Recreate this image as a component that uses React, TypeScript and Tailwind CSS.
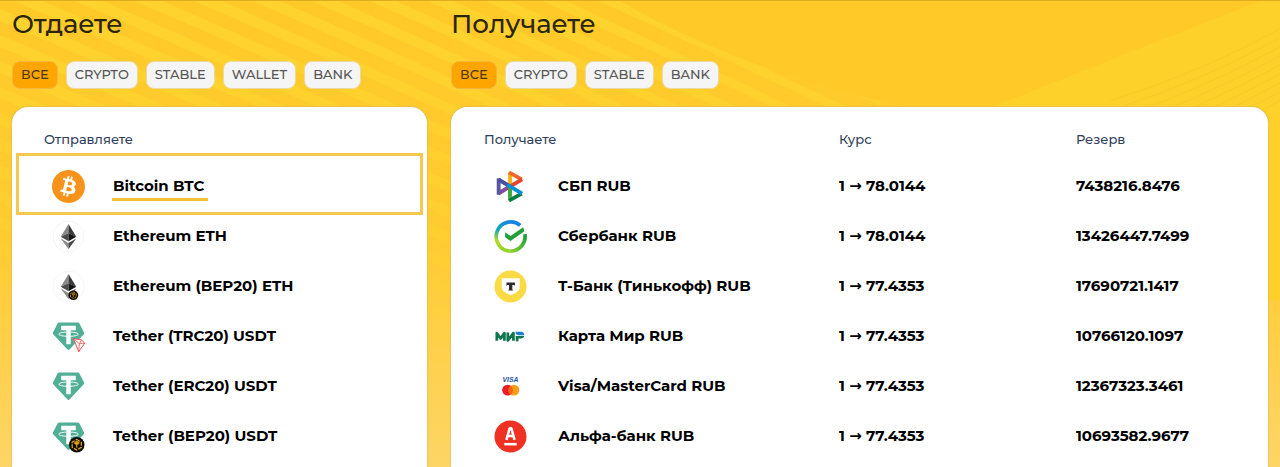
import { useState } from 'react';
import type { ReactNode } from 'react';
import { SiBitcoin } from 'react-icons/si';

function BitcoinIcon() {
  return <SiBitcoin className="size-[33px] text-[#f7931a]" />;
}

function EthShape() {
  return (
    <>
      <circle cx="17" cy="17" r="16" fill="#fff" stroke="#f6f6f6" />
      <path d="M17 4 9 17.200 17 13.600Z" fill="#8a8a8a" />
      <path d="M17 4v9.600l8 3.600Z" fill="#393939" />
      <path d="M9 17.200 17 13.600V22Z" fill="#4b4b4b" />
      <path d="M25 17.200 17 13.600V22Z" fill="#151515" />
      <path d="M9 19 17 23.800V30Z" fill="#8a8a8a" />
      <path d="M25 19 17 23.800V30Z" fill="#454545" />
    </>
  );
}

function BnbBadge({ cx, cy, r }: { cx: number; cy: number; r: number }) {
  return (
    <g transform={`translate(${cx} ${cy}) scale(${r / 8})`}>
      <circle r="8" fill="#0c0a05" />
      <path d="M0-5.400 4.700-2.700V2.700L0 5.400-4.700 2.700V-2.700Z" fill="none" stroke="#e5a20c" strokeWidth="1.300" strokeDasharray="4 1.200" />
      <path d="M-2.600-1.700 0-.2 2.600-1.700M0 0V3M0-3.400 1.600-2.500 0-1.600-1.600-2.500Z" fill="none" stroke="#e5a20c" strokeWidth="1.200" />
    </g>
  );
}

function EthereumIcon() {
  return <svg viewBox="0 0 34 34" className="size-[33px]"><EthShape /></svg>;
}

function EthereumBepIcon() {
  return (
    <svg viewBox="0 0 34 34" className="size-[33px]">
      <EthShape />
      <BnbBadge cx={22} cy={26} r={5} />
    </svg>
  );
}

function TetherShape() {
  return (
    <>
      <path d="M7.200 2.500h19.600a1.500 1.500 0 0 1 1.300.8L33 13a1.500 1.500 0 0 1-.3 1.800L18 30.500a1.500 1.500 0 0 1-2 0L1.300 14.800A1.500 1.500 0 0 1 1 13l4.900-9.700a1.500 1.500 0 0 1 1.300-.8Z" fill="#50af95" />
      <path d="M9.500 6h15v4.600h-5.200V25h-4.600V10.600H9.500Z" fill="#fff" />
      <path d="M14.500 12.500c-4.300.2-7.500 1-7.500 2.100 0 1.300 4.500 2.200 10 2.200s10-.9 10-2.200c0-1.100-3.200-1.900-7.500-2.100" fill="none" stroke="#fff" strokeWidth="1" />
    </>
  );
}

function TetherIcon() {
  return <svg viewBox="0 0 34 34" className="size-[33px]"><TetherShape /></svg>;
}

function TetherTrcIcon() {
  return (
    <svg viewBox="0 0 34 34" className="size-[33px]">
      <TetherShape />
      <path d="M22 19 30.500 20.700 33.700 23.800 27.500 32.700Z" fill="#fff" stroke="#ef4d50" strokeWidth="1" strokeLinejoin="round" />
      <path d="m22 19 6.200 5.500-.7 8.200M28.200 24.500l5.500-.7M28.200 24.500l2.300-3.800" fill="none" stroke="#ef4d50" strokeWidth=".8" />
    </svg>
  );
}

function TetherBepIcon() {
  return (
    <svg viewBox="0 0 34 34" className="size-[33px]">
      <TetherShape />
      <BnbBadge cx={25.500} cy={25.500} r={8} />
    </svg>
  );
}

function SbpIcon() {
  return (
    <svg viewBox="0 0 34 34" className="size-[33px]" fill="none" strokeWidth="4">
      <path d="M16.500 2.500V17" stroke="#fbb01b" />
      <path d="M16.500 17V31.500" stroke="#8bc53f" />
      <path d="M15.400 2.400 28.600 9.700" stroke="#f0672a" />
      <path d="M29 9.600 15.500 17.500" stroke="#e8452c" />
      <path d="M15.400 31.600 28.600 24.300" stroke="#0b7e43" />
      <path d="M15.500 17.500 4.500 24.200" stroke="#8b4a9c" />
      <path d="M4.800 8.500v17" stroke="#5b57a2" />
      <path d="M4.500 9.800 15 16" stroke="#4b4fa3" />
      <path d="M13.500 15.200 29 24.400" stroke="#0a8fd6" />
      <path d="M14.500 17.500 18.500 20v7L14.500 30Z" fill="#3fa845" />
    </svg>
  );
}

function SberIcon() {
  return (
    <svg viewBox="0 0 34 34" className="size-[33px]">
      <defs>
        <linearGradient id="sber" x1=".6" y1="0" x2=".3" y2="1">
          <stop offset="0" stopColor="#1685e2" />
          <stop offset=".4" stopColor="#16a9b8" />
          <stop offset=".75" stopColor="#b5dc23" />
          <stop offset="1" stopColor="#8fd02c" />
        </linearGradient>
        <linearGradient id="sber-right" x1="0" y1="1" x2="1" y2="0">
          <stop offset="0" stopColor="#8fd02c" />
          <stop offset="1" stopColor="#189f39" />
        </linearGradient>
      </defs>
      <path d="M27 5.600A15 15 0 1 0 17 32" fill="none" stroke="url(#sber)" strokeWidth="3.800" />
      <path d="M16.800 32A15 15 0 0 0 31.800 14.500" fill="none" stroke="url(#sber-right)" strokeWidth="3.800" />
      <path d="m11.500 12.500 5.500 4L30 7.500l1.300 4.200L17 21.700l-5.500-4Z" fill="#21a038" />
    </svg>
  );
}

function TBankIcon() {
  return (
    <svg viewBox="0 0 34 34" className="size-[33px]">
      <circle cx="17" cy="17" r="16.500" fill="#fbdb45" />
      <path d="M8 8.500h18.500v8.700c0 3-1.800 5-4.500 6.400L17.200 26l-4.700-2.400C9.800 22.200 8 20.200 8 17.200Z" fill="#fff" />
      <path d="M12.800 13h8.800v3.400l-.9-.9h-1.800v4.300l.9 1.400h-5.200l.9-1.400v-4.300h-1.800l-.9.900Z" fill="#2d2d2d" />
    </svg>
  );
}

function MirIcon() {
  return (
    <svg viewBox="0 0 34 34" className="size-[33px]">
      <path d="M2.900 21.500v-8L6.800 19l3.900-5.500v8M14.200 13v8L20 13.500v8" fill="none" stroke="#0f754e" strokeWidth="2.800" strokeLinejoin="round" />
      <path d="M23.800 16.500v5.500" stroke="#0f754e" strokeWidth="2.800" />
      <path d="M22.400 16.500h8.700a3 3 0 0 1-2.900 2.600h-3.600a3 3 0 0 1-2.200-2.600Z" fill="#0f754e" />
      <path d="M22.200 12.200H28a3 3 0 0 1 3.100 3.500h-5.800a3.300 3.300 0 0 1-3.100-3.500Z" fill="#1b7fd3" />
    </svg>
  );
}

function VisaMasterIcon() {
  return (
    <svg viewBox="0 0 34 34" className="size-[33px]">
      <text x="17" y="12.500" textAnchor="middle" fontSize="7" fontStyle="italic" fontWeight="700" fill="#174f9f" fontFamily="Liberation Sans, sans-serif">VISA</text>
      <circle cx="14" cy="20.800" r="5.600" fill="#eb1c26" />
      <circle cx="20.500" cy="20.800" r="5.600" fill="#f79e1b" />
      <path d="M17.250 16.200a5.600 5.600 0 0 1 0 9.200 5.600 5.600 0 0 1 0-9.200Z" fill="#fb6314" />
    </svg>
  );
}

function AlfaIcon() {
  return (
    <svg viewBox="0 0 34 34" className="size-[33px]">
      <circle cx="17" cy="17" r="16.500" fill="#ef3124" />
      <path d="m12.800 20.500 3.200-11.300a1 1 0 0 1 2 0l3.200 11.300M14 16.600h6" fill="none" stroke="#fff" strokeWidth="2.600" />
      <path d="M10.600 24.900h12.800" stroke="#fff" strokeWidth="2.600" />
    </svg>
  );
}

type Currency = { name: string; icon: ReactNode };
type Offer = Currency & { rate: string; reserve: string };

const sendList: Currency[] = [
  { name: 'Bitcoin BTC', icon: <BitcoinIcon /> },
  { name: 'Ethereum ETH', icon: <EthereumIcon /> },
  { name: 'Ethereum (BEP20) ETH', icon: <EthereumBepIcon /> },
  { name: 'Tether (TRC20) USDT', icon: <TetherTrcIcon /> },
  { name: 'Tether (ERC20) USDT', icon: <TetherIcon /> },
  { name: 'Tether (BEP20) USDT', icon: <TetherBepIcon /> },
];

const receiveList: Offer[] = [
  { name: 'СБП RUB', icon: <SbpIcon />, rate: '78.0144', reserve: '7438216.8476' },
  { name: 'Сбербанк RUB', icon: <SberIcon />, rate: '78.0144', reserve: '13426447.7499' },
  { name: 'Т-Банк (Тинькофф) RUB', icon: <TBankIcon />, rate: '77.4353', reserve: '17690721.1417' },
  { name: 'Карта Мир RUB', icon: <MirIcon />, rate: '77.4353', reserve: '10766120.1097' },
  { name: 'Visa/MasterCard RUB', icon: <VisaMasterIcon />, rate: '77.4353', reserve: '12367323.3461' },
  { name: 'Альфа-банк RUB', icon: <AlfaIcon />, rate: '77.4353', reserve: '10693582.9677' },
];

function Background() {
  const stripes = Array.from({ length: 24 }, (_, i) => i * 26 - 330);
  return (
    <svg aria-hidden="true" viewBox="0 0 1280 467" preserveAspectRatio="none" className="absolute inset-0 -z-10 h-full w-full">
      <defs>
        <linearGradient id="base" x1="0" y1="0" x2="0" y2="1">
          <stop offset="0" stopColor="#ffca28" />
          <stop offset=".5" stopColor="#ffcb30" />
          <stop offset="1" stopColor="#fdd566" />
        </linearGradient>
        <linearGradient id="fade" gradientUnits="userSpaceOnUse" x1="0" y1="0" x2="0" y2="467">
          <stop offset="0" stopColor="#ffd42e" stopOpacity=".9" />
          <stop offset=".4" stopColor="#ffd42e" stopOpacity=".5" />
          <stop offset=".8" stopColor="#ffd42e" stopOpacity="0" />
        </linearGradient>
      </defs>
      <rect width="1280" height="467" fill="url(#base)" />
      {stripes.map(y => (
        <path key={y} d={`M0 ${y}Q400 ${y + 170} 880 ${y + 400}v9Q400 ${y + 182} 0 ${y + 12}Z`} fill="url(#fade)" />
      ))}
      <path d="M620 0Q740 70 910 107H1280V0Z" fill="#ffca28" />
      <path d="M990 107Q1120 55 1260 0H1280V300H990Z" fill="#fdd02a" />
      {[0, 1, 2, 3, 4, 5, 6, 7, 8].map(i => (
        <path key={i} d={`M1110 ${100 + i * 10}Q1200 ${72 + i * 9} 1280 ${28 + i * 9}`} fill="none" stroke="#fbc92a" strokeWidth="1" />
      ))}
    </svg>
  );
}

function Filters({ label, items }: { label: string; items: string[] }) {
  const [active, setActive] = useState(items[0]);
  return (
    <div role="group" aria-label={label} className="mt-[17px] flex flex-wrap gap-2">
      {items.map(item => (
        <button
          key={item}
          type="button"
          aria-pressed={item === active}
          onClick={() => setActive(item)}
          className={`h-7 rounded-lg border px-2 text-[13px] font-medium ${item === active ? 'border-[#f3b840] bg-[#ffa500] text-[#4a3708]' : 'border-[#ead9a0] bg-[#f5f5f5] text-[#555]'}`}
        >
          {item}
        </button>
      ))}
    </div>
  );
}

export default function App() {
  const [selected, setSelected] = useState('Bitcoin BTC');

  return (
    <main className="relative isolate grid min-h-screen grid-cols-[415fr_817fr] gap-6 border-t border-[#dfac20] px-3 font-['Montserrat','Inter',sans-serif] text-black">
      <Background />

      <section className="flex flex-col">
        <h2 className="pt-[3px] text-[26px] leading-10 font-medium text-[#2b2510]">Отдаете</h2>
        <Filters label="Отдаете" items={['ВСЕ', 'CRYPTO', 'STABLE', 'WALLET', 'BANK']} />
        <div className="mt-[18px] flex-1 rounded-t-2xl bg-white px-1 pt-[22px] shadow-[0_0_2px_#b9a56a]">
          <h3 className="mb-3 px-7 text-[13px] leading-5 font-medium text-[#2f3e5a]">Отправляете</h3>
          <ul>
            {sendList.map(c => (
              <li key={c.name} className="relative">
                {c.name === selected && <span className="pointer-events-none absolute inset-x-0 -top-2 -bottom-1 border-3 border-[#f2c94c]" />}
                <button type="button" onClick={() => setSelected(c.name)} className="flex h-[50px] w-full items-center px-9 text-left text-[15px] font-bold">
                  <span className="flex w-[60px] shrink-0">{c.icon}</span>
                  <span className={`border-y-3 border-t-transparent pr-1 pl-px leading-6 ${c.name === selected ? 'border-b-[#f2c230]' : 'border-b-transparent'}`}>{c.name}</span>
                </button>
              </li>
            ))}
          </ul>
        </div>
      </section>

      <section className="flex flex-col">
        <h2 className="pt-[3px] text-[26px] leading-10 font-medium text-[#2b2510]">Получаете</h2>
        <Filters label="Получаете" items={['ВСЕ', 'CRYPTO', 'STABLE', 'BANK']} />
        <div className="mt-[18px] flex-1 rounded-t-2xl bg-white pt-[22px] shadow-[0_0_2px_#b9a56a]">
          <table className="w-full table-fixed text-left">
            <thead className="text-[13px] leading-5 text-[#2f3e5a]">
              <tr>
                <th className="w-[47%] pb-3 pl-[33px] font-medium">Получаете</th>
                <th className="w-[29%] pb-3 pl-1 font-medium">Курс</th>
                <th className="pb-3 pl-1 font-medium">Резерв</th>
              </tr>
            </thead>
            <tbody className="text-[15px] font-bold">
              {receiveList.map(o => (
                <tr key={o.name} className="h-[50px]">
                  <td className="pl-[43px]">
                    <div className="flex items-center">
                      <span className="flex w-16 shrink-0">{o.icon}</span>
                      {o.name}
                    </div>
                  </td>
                  <td className="pl-1">1 <span className="font-['DejaVu_Sans',sans-serif]">→</span> {o.rate}</td>
                  <td className="pl-1">{o.reserve}</td>
                </tr>
              ))}
            </tbody>
          </table>
        </div>
      </section>
    </main>
  );
}
